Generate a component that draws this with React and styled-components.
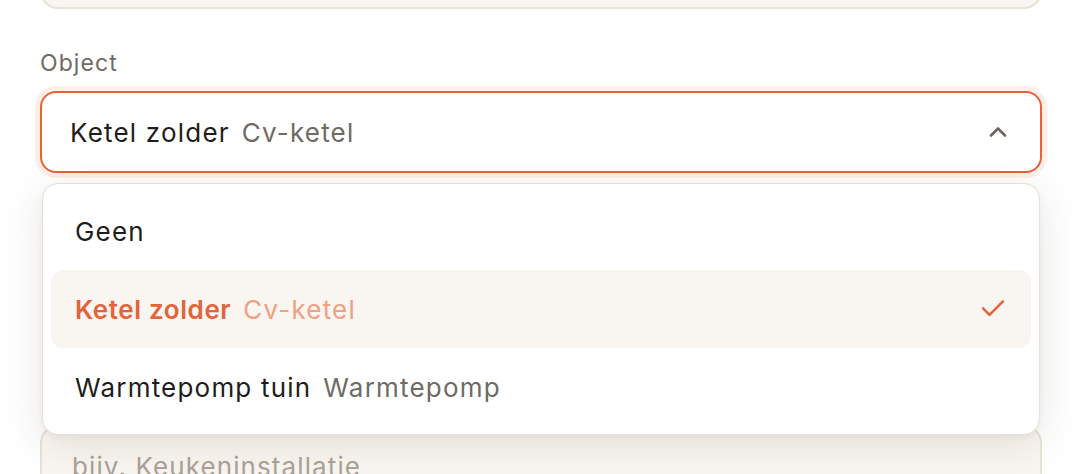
import React from 'react'
import styled, { createGlobalStyle } from 'styled-components'

const GlobalStyle = createGlobalStyle`
  * { box-sizing: border-box; }
  body {
    margin: 0;
    background: #fff;
    font-family: Inter, "Noto Sans", sans-serif;
    overflow: hidden;
  }
`

const Form = styled.div`
  display: flex;
  flex-direction: column;
  gap: 40px;
  padding: 0 40px;
  margin-top: -73px;
`

const Group = styled.div`
  display: flex;
  flex-direction: column;
  gap: 13px;
  position: relative;
`

const Label = styled.label`
  font-size: 23px;
  line-height: 29px;
  color: #6f6a64;
  letter-spacing: 1.1px;
`

const Input = styled.div`
  height: 82px;
  display: flex;
  align-items: center;
  padding: 0 30px;
  margin-top: ${p => p.$offset || 0}px;
  border: 2px solid #e8e2d8;
  border-radius: 18px;
  background: #f9f6f1;
  font-size: 26px;
  letter-spacing: 1.1px;
  color: #a9a39b;
`

const SelectWrap = styled.div`
  position: relative;
`

const Trigger = styled.button`
  width: 100%;
  height: 82px;
  display: flex;
  align-items: center;
  justify-content: space-between;
  padding: 0 30px 0 28px;
  border: 2px solid #e4633a;
  border-radius: 16px;
  background: #fff;
  box-shadow: 0 0 0 5px #fdeee8;
  font-family: inherit;
  cursor: pointer;
`

const Value = styled.span`
  display: flex;
  gap: 12px;
  font-size: 26px;
  letter-spacing: ${p => p.$active ? 0.6 : 1.2}px;
  color: ${p => p.$active ? '#e4633a' : '#1f1d1b'};
  font-weight: ${p => p.$active ? 600 : 400};
`

const Sub = styled.span`
  font-weight: 400;
  letter-spacing: 1.2px;
  color: ${p => p.$active ? '#f0a085' : '#6f6a64'};
`

const Menu = styled.ul`
  position: absolute;
  top: calc(100% + 10px);
  left: 2px;
  right: 2px;
  margin: 0;
  padding: 8px;
  list-style: none;
  background: #fff;
  border: 1px solid #e6e0d6;
  border-radius: 16px;
  box-shadow: 0 10px 40px rgba(70, 50, 30, 0.12), 0 2px 6px rgba(70, 50, 30, 0.05);
  z-index: 10;
`

const Option = styled.li`
  height: 78px;
  display: flex;
  align-items: center;
  justify-content: space-between;
  padding: 0 24px 0 24px;
  border-radius: 12px;
  background: ${p => p.$active ? '#f9f5f0' : 'transparent'};
`

const Chevron = () => (
  <svg width="24" height="24" viewBox="0 0 24 24" fill="none" stroke="#6a655f" strokeWidth="2.6" strokeLinecap="round" strokeLinejoin="round">
    <path d="M5 15.5l7-7 7 7" />
  </svg>
)

const Check = () => (
  <svg width="28" height="28" viewBox="0 0 24 24" fill="none" stroke="#e4633a" strokeWidth="2.1" strokeLinecap="round" strokeLinejoin="round">
    <path d="M3.5 11.5l5.5 5.5L20.5 5.5" />
  </svg>
)

const options = [
  { name: 'Geen' },
  { name: 'Ketel zolder', type: 'Cv-ketel' },
  { name: 'Warmtepomp tuin', type: 'Warmtepomp' }
]

export default function App () {
  const selected = 'Ketel zolder'
  return (
    <>
      <GlobalStyle />
      <Form>
        <Input />
        <Group>
          <Label>Object</Label>
          <SelectWrap>
            <Trigger type='button'>
              <Value>
                Ketel zolder <Sub>Cv-ketel</Sub>
              </Value>
              <Chevron />
            </Trigger>
            <Menu>
              {options.map(o => {
                const active = o.name === selected
                return (
                  <Option key={o.name} $active={active}>
                    <Value $active={active}>
                      {o.name}
                      {o.type && <Sub $active={active}>{o.type}</Sub>}
                    </Value>
                    {active && <Check />}
                  </Option>
                )
              })}
            </Menu>
          </SelectWrap>
        </Group>
        <Input $offset={212} aria-label='Omschrijving'>bijv. Keukeninstallatie</Input>
      </Form>
    </>
  )
}
